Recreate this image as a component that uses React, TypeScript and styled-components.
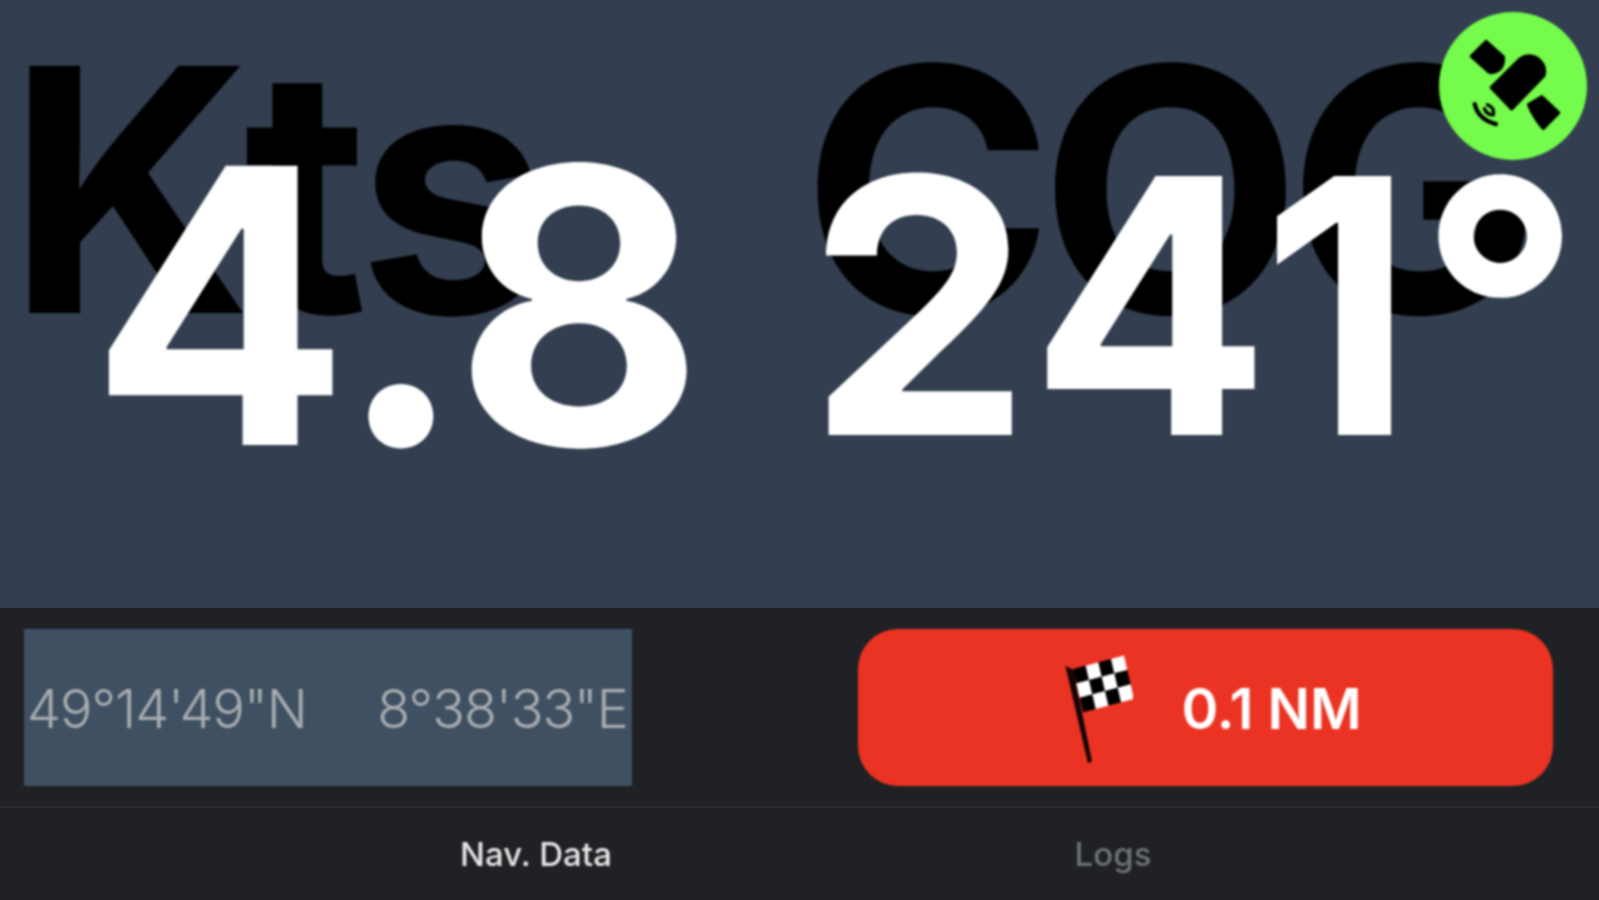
import React from 'react';
import styled, {createGlobalStyle, css} from 'styled-components';

const FONT = `Inter, "Liberation Sans", sans-serif`;

// the reference is an upscaled low-res capture, everything in it is a bit soft
const soft = css`
  filter: blur(0.8px);
`

const GlobalStyle = createGlobalStyle`
  html, body {
    margin: 0;
    padding: 0;
    background: #1f2125;
  }
`

const SatelliteIcon = () => (
    <BadgeSvg viewBox="118 35 442 445">
        <g strokeLinejoin="round" stroke="#000" strokeWidth="10">
            <path d="M258 124 L310 170 Q312 195 298 208 Q284 220 268 216 L214 168 Z"/>
            <path d="M274 262 L358 178 Q385 158 412 174 Q440 195 432 226 L335 326 Z"/>
            <path d="M386 314 L425 290 L476 338 L430 385 Q402 352 386 314 Z"/>
        </g>
        <path d="M224 312 Q234 358 288 372" fill="none" stroke="#000" strokeWidth="13" strokeLinecap="round"/>
        <path d="M262 314 Q284 322 280 344 Q262 346 253 326" fill="none" stroke="#000" strokeWidth="10" strokeLinecap="round"/>
    </BadgeSvg>
);

const FlagIcon = () => {
    const cells = [];
    for (let row = 0; row < 3; row++) {
        for (let col = 0; col < 4; col++) {
            cells.push(<rect key={`${row}-${col}`} x={col} y={row} width="1.02" height="1.02"
                             fill={(row + col) % 2 === 0 ? '#000' : '#fff'}/>);
        }
    }
    return (
        <FlagSvg viewBox="75 40 210 330">
            <path d="M82 75 L106 88 L162 362 L150 368 Z" fill="#140505"/>
            <g transform="matrix(38 -10 10 43 105 85)">{cells}</g>
        </FlagSvg>
    );
};

const App: React.FC = () => {
    return (
        <Screen>
            <GlobalStyle/>
            <Readouts>
                <Gauge>
                    <GaugeLabel $inset={7} $spacing={-8}>Kts</GaugeLabel>
                    <GaugeValue $size={384} $top={76} $spacing={0} $shift={-3}>4.8</GaugeValue>
                </Gauge>
                <Gauge>
                    <GaugeLabel $inset={2} $spacing={-14}>COG</GaugeLabel>
                    <GaugeValue $size={356} $top={92} $spacing={4} $shift={-3}>241°</GaugeValue>
                </Gauge>
                <SatelliteBadge>
                    <SatelliteIcon/>
                </SatelliteBadge>
            </Readouts>
            <InfoBar>
                <Position>
                    <span>49°14'49"N</span>
                    <span>8°38'33"E</span>
                </Position>
                <DistanceButton>
                    <FlagIcon/>
                    <span>0.1 NM</span>
                </DistanceButton>
            </InfoBar>
            <TabBar>
                <Tab $active>Nav. Data</Tab>
                <Tab>Logs</Tab>
            </TabBar>
        </Screen>
    );
};

export default App;

const Screen = styled.div`
  width: 1599px;
  height: 900px;
  display: flex;
  flex-direction: column;
  overflow: hidden;
  font-family: ${FONT};
  background-color: #1f2125;
`
const Readouts = styled.div`
  position: relative;
  height: 608px;
  flex-shrink: 0;
  display: grid;
  grid-template-columns: 800px 799px;
  background-color: #333f50;
  overflow: hidden;
`
const Gauge = styled.div`
  display: grid;
  min-width: 0;
`
const GaugeLabel = styled.div<{ $inset: number; $spacing: number }>`
  ${soft};
  grid-area: 1 / 1;
  width: 790px;
  padding-left: ${props => props.$inset}px;
  font-size: 340px;
  font-weight: 700;
  line-height: 380px;
  letter-spacing: ${props => props.$spacing}px;
  color: #000;
  white-space: nowrap;
`
const GaugeValue = styled.div<{ $size: number; $top: number; $spacing: number; $shift?: number }>`
  ${soft};
  grid-area: 1 / 1;
  justify-self: center;
  align-self: start;
  margin-top: ${props => props.$top}px;
  margin-left: ${props => (props.$shift ?? 0) * 2}px;
  font-size: ${props => props.$size}px;
  font-weight: 750;
  line-height: 1.2;
  letter-spacing: ${props => props.$spacing}px;
  color: #fff;
  white-space: nowrap;
`
const SatelliteBadge = styled.div`
  ${soft};
  position: absolute;
  top: 12px;
  right: 12px;
  width: 148px;
  height: 148px;
  border-radius: 50%;
  background-color: #75fb4c;
`
const BadgeSvg = styled.svg`
  display: block;
  width: 100%;
  height: 100%;
`
const InfoBar = styled.div`
  height: 198px;
  flex-shrink: 0;
  box-sizing: border-box;
  display: flex;
  align-items: center;
  justify-content: space-between;
  padding: 0 46px 0 24px;
`
const Position = styled.div`
  ${soft};
  width: 608px;
  height: 157px;
  box-sizing: border-box;
  padding: 3px 4px 0 3px;
  display: flex;
  align-items: center;
  justify-content: space-between;
  background-color: #3f5062;
  color: #a9adb0;
  font-size: 54px;
  font-weight: 350;
  letter-spacing: -1px;
  white-space: nowrap;
`
const DistanceButton = styled.div`
  ${soft};
  width: 695px;
  height: 157px;
  box-sizing: border-box;
  padding: 3px 0 0 14px;
  display: flex;
  align-items: center;
  justify-content: center;
  gap: 48px;
  border-radius: 40px;
  background-color: #eb3323;
  color: #fff;
  font-size: 56px;
  font-weight: 600;
`
const FlagSvg = styled.svg`
  width: 70px;
  height: 110px;
`
const TabBar = styled.div`
  flex: 1;
  display: grid;
  grid-template-columns: 577px 577px;
  justify-content: center;
  padding-left: 50px;
  align-items: center;
  border-top: 2px solid #2a2c30;
`
const Tab = styled.div<{ $active?: boolean }>`
  ${soft};
  text-align: center;
  font-size: 33px;
  font-weight: 500;
  color: ${props => props.$active ? '#e6e6e6' : '#6f7276'};
`
